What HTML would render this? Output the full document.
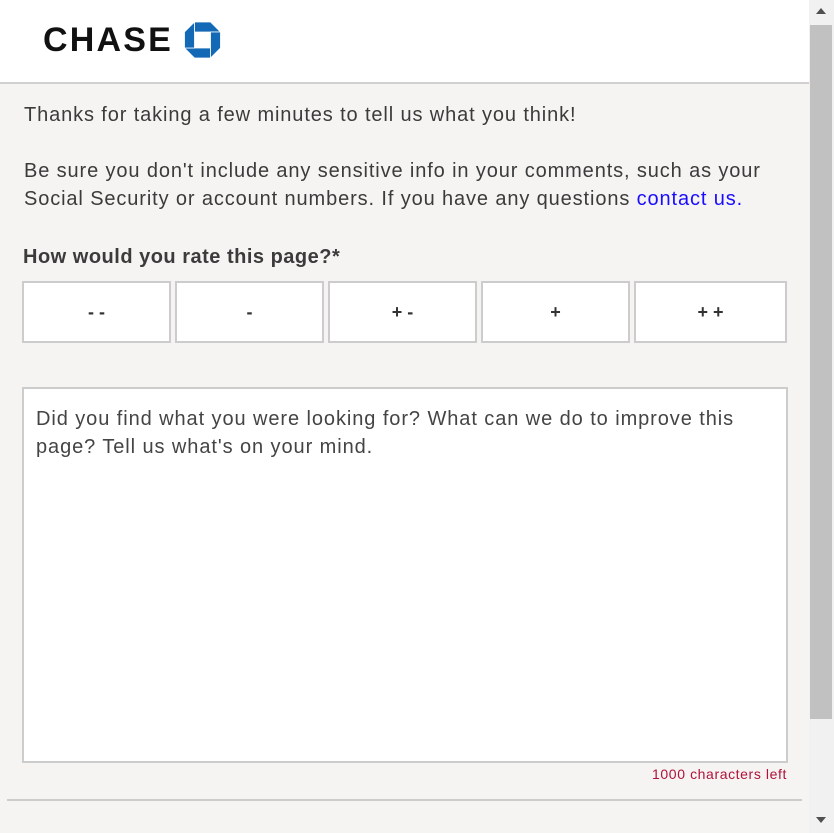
<!DOCTYPE html>
<html><head><style>
html,body{margin:0;padding:0;width:834px;height:833px;overflow:hidden;background:#f5f4f2;font-family:"Liberation Sans",sans-serif;color:#3b3b3b}
.hdr{position:absolute;left:0;top:0;width:809px;height:82px;background:#fff;border-bottom:2px solid #d0d0d0}
.logo{position:absolute;left:43px;top:20px;font-weight:bold;font-size:34px;letter-spacing:2.2px;color:#111;line-height:40px}
p{position:absolute;left:24px;margin:0;font-size:20px;line-height:28px;width:780px;letter-spacing:0.88px}
a{color:#1a0dff;text-decoration:none}
.q{position:absolute;left:23px;top:246px;font-size:20px;font-weight:bold;color:#3b3b3b;letter-spacing:0.5px}
.btn{position:absolute;top:281px;width:149px;height:62px;background:#fff;border:2px solid #ccc;box-sizing:border-box;text-align:center;line-height:58px;font-size:18px;font-weight:bold;color:#333}
.ta{position:absolute;left:22px;top:387px;width:766px;height:376px;background:#fff;border:2px solid #ccc;box-sizing:border-box;padding:16px 12px;font-size:20px;line-height:28px;color:#444;letter-spacing:0.92px}
.cnt{position:absolute;right:47px;top:766px;font-size:14px;color:#b0123a;letter-spacing:0.6px}
.sep{position:absolute;left:7px;top:799px;width:795px;height:2px;background:#ccc}
.sb{position:absolute;left:809px;top:0;width:25px;height:833px;background:#f1f1f1}
.th{position:absolute;left:810px;top:25px;width:22px;height:694px;background:#c1c1c1}
</style></head><body>
<div class="hdr"><div class="logo">CHASE</div>
<svg style="position:absolute;left:184px;top:22px" width="37" height="36" viewBox="0 0 36 36">
<g fill="#1469b6" stroke="#fff" stroke-width="0.8">
<polygon points="10,0 26,0 36,10 10,10"/>
<polygon points="36,10 36,26 26,36 26,10"/>
<polygon points="26,36 10,36 0,26 26,26"/>
<polygon points="0,26 0,10 10,0 10,26"/>
</g>
<rect x="11" y="11" width="14" height="14" fill="#fff"/>
</svg></div>
<p style="top:101px">Thanks for taking a few minutes to tell us what you think!</p>
<p style="top:157px">Be sure you don't include any sensitive info in your comments, such as your Social Security or account numbers. If you have any questions <a>contact us.</a></p>
<div class="q">How would you rate this page?*</div>
<div class="btn" style="left:22px">- -</div>
<div class="btn" style="left:175px">-</div>
<div class="btn" style="left:328px">+ -</div>
<div class="btn" style="left:481px">+</div>
<div class="btn" style="left:634px;width:153px">+ +</div>
<div class="ta">Did you find what you were looking for? What can we do to improve this page? Tell us what's on your mind.</div>
<div class="cnt">1000 characters left</div>
<div class="sep"></div>
<div class="sb"></div><div class="th"></div>
<svg style="position:absolute;left:816px;top:8px" width="10" height="6"><path d="M0,6 L5,0 L10,6Z" fill="#505050"/></svg>
<svg style="position:absolute;left:816px;top:817px" width="10" height="6"><path d="M0,0 L5,6 L10,0Z" fill="#505050"/></svg>
</body></html>
